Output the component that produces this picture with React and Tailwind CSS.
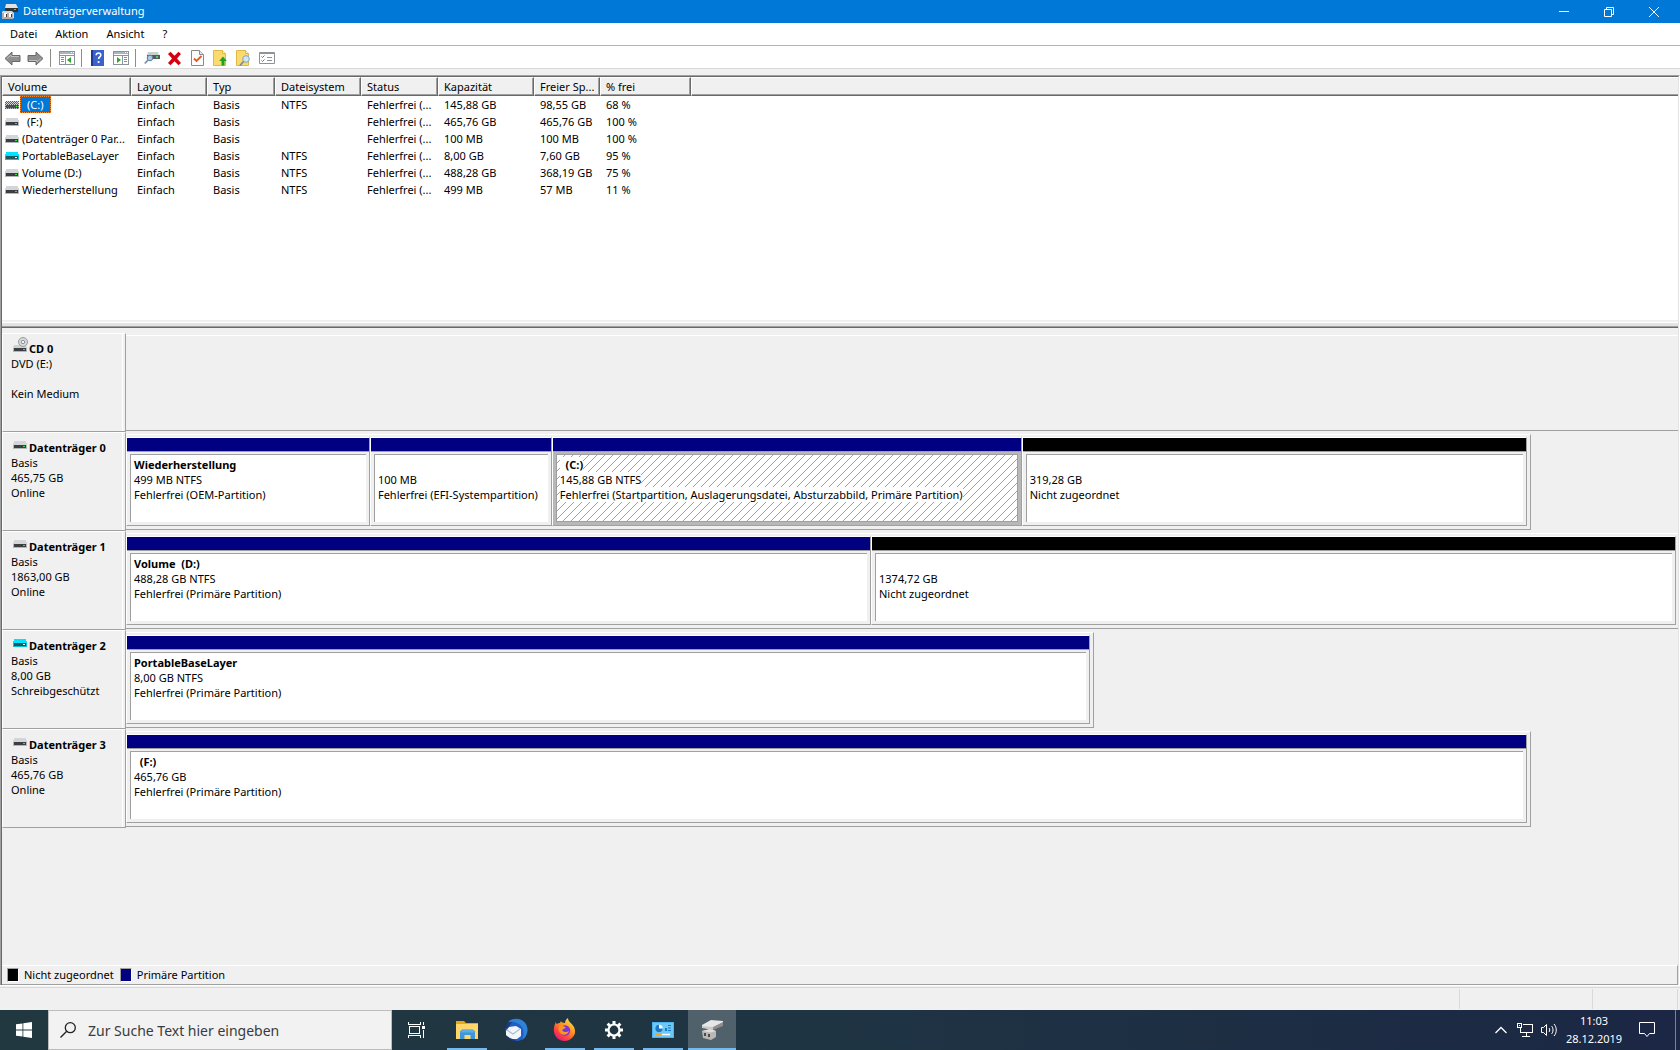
import clsx from 'clsx';

const MENU = ['Datei', 'Aktion', 'Ansicht', '?'];

const COLUMNS = ['Volume', 'Layout', 'Typ', 'Dateisystem', 'Status', 'Kapazität', 'Freier Sp...', '% frei'];

const VOLUMES = [
  { name: '(C:)', letterOnly: true, selected: true, fs: 'NTFS', size: '145,88 GB', free: '98,55 GB', pct: '68 %' },
  { name: '(F:)', letterOnly: true, fs: '', size: '465,76 GB', free: '465,76 GB', pct: '100 %' },
  { name: '(Datenträger 0 Par...', fs: '', size: '100 MB', free: '100 MB', pct: '100 %' },
  { name: 'PortableBaseLayer', virtual: true, fs: 'NTFS', size: '8,00 GB', free: '7,60 GB', pct: '95 %' },
  { name: 'Volume (D:)', fs: 'NTFS', size: '488,28 GB', free: '368,19 GB', pct: '75 %' },
  { name: 'Wiederherstellung', fs: 'NTFS', size: '499 MB', free: '57 MB', pct: '11 %' },
];

// width = share of the pane, grow = share of the disk
const DISKS = [
  { title: 'CD 0', kind: 'cd', lines: ['DVD (E:)', '', 'Kein Medium'], width: 100, parts: [] },
  {
    title: 'Datenträger 0', lines: ['Basis', '465,75 GB', 'Online'], width: 90.5,
    parts: [
      { grow: 242, name: 'Wiederherstellung', size: '499 MB NTFS', status: 'Fehlerfrei (OEM-Partition)' },
      { grow: 180, name: '', size: '100 MB', status: 'Fehlerfrei (EFI-Systempartition)' },
      { grow: 468, name: '  (C:)', size: '145,88 GB NTFS', status: 'Fehlerfrei (Startpartition, Auslagerungsdatei, Absturzabbild, Primäre Partition)', selected: true },
      { grow: 503, name: '', size: '319,28 GB', status: 'Nicht zugeordnet', free: true },
    ],
  },
  {
    title: 'Datenträger 1', lines: ['Basis', '1863,00 GB', 'Online'], width: 100,
    parts: [
      { grow: 743, name: 'Volume  (D:)', size: '488,28 GB NTFS', status: 'Fehlerfrei (Primäre Partition)' },
      { grow: 803, name: '', size: '1374,72 GB', status: 'Nicht zugeordnet', free: true },
    ],
  },
  {
    title: 'Datenträger 2', kind: 'virtual', lines: ['Basis', '8,00 GB', 'Schreibgeschützt'], width: 62.4,
    parts: [{ grow: 1, name: 'PortableBaseLayer', size: '8,00 GB NTFS', status: 'Fehlerfrei (Primäre Partition)' }],
  },
  {
    title: 'Datenträger 3', lines: ['Basis', '465,76 GB', 'Online'], width: 90.5,
    parts: [{ grow: 1, name: '  (F:)', size: '465,76 GB', status: 'Fehlerfrei (Primäre Partition)' }],
  },
];

function DiskIcon({ virtual, selected }) {
  return (
    <svg width="14" height="8" viewBox="0 0 14 8" className="shrink-0" shapeRendering="crispEdges">
      <path d="M1 0h12l1 4H0z" fill={virtual ? '#00e5ff' : '#d3d5d8'} />
      <path d="M0 4h14v4H0z" fill={virtual ? '#00c4d0' : '#b4b7ba'} />
      <path d="M1 4h12v3H1z" fill={virtual ? '#20565c' : '#3c3f41'} />
      <path d="M10 5h2v1h-2z" fill={virtual ? '#ffffff' : '#2bea3c'} />
      {selected && (
        <>
          <path d="M0 1.500h14M0 3.500h14M0 5.500h14M0 7.500h14" stroke="#0078d7" strokeDasharray="1 1" />
          <path d="M0 .5h14M0 2.500h14M0 4.500h14M0 6.500h14" stroke="#0078d7" strokeDasharray="1 1" strokeDashoffset="1" />
        </>
      )}
    </svg>
  );
}

function CdIcon() {
  return (
    <svg width="15" height="15" viewBox="0 0 15 15" className="shrink-0">
      <path d="M1 8h12l1 3H0z" fill="#cfd1d3" />
      <path d="M0 11h14v4H0z" fill="#b4b7ba" />
      <path d="M1 11h12v3H1z" fill="#3c3f41" />
      <path d="M10 12h2v1h-2z" fill="#2bea3c" />
      <circle cx="10" cy="5" r="4.500" fill="#d6d8da" stroke="#9a9c9e" />
      <circle cx="10" cy="5" r="1.700" fill="#f4f4f4" stroke="#8f9193" />
    </svg>
  );
}

function AppIcon() {
  return (
    <svg width="16" height="16" viewBox="0 0 16 16">
      <path d="M4 0h10l2 4H3z" fill="#e2e2e2" />
      <path d="M3 4h13v4H3z" fill="#2f3334" />
      <path d="M12 5h2v1h-2z" fill="#2bea3c" />
      <path d="M1 7h9l2 2v5l-2 1H0V8z" fill="#d6d6d6" />
      <path d="M0 9h11v6H0z" fill="#b3aeac" />
      <path d="M2 9h3v4H2zM7 9h3v4H7z" fill="#fff" />
      <path d="M4 10h1v3H4zM9 10h1v3H9z" fill="#3a3a3a" />
    </svg>
  );
}

function Arrow({ flip }) {
  return (
    <svg width="17" height="15" viewBox="0 0 17 15" className={flip ? 'rotate-180' : ''}>
      <path d="M1 7.500 8 1v3.500h8v6H8V14z" fill="#8f8f8f" stroke="#6a6a6a" strokeLinejoin="round" />
      <path d="M3 7.500 7 4v1.500h8" fill="none" stroke="#bdbdbd" />
    </svg>
  );
}

function PaneIcon({ right }) {
  return (
    <svg width="16" height="14" viewBox="0 0 16 14" shapeRendering="crispEdges">
      <path d="M.5.5h15v13H.5z" fill="#fff" stroke="#8a94a0" />
      <path d="M1 1h14v2H1z" fill="#a9b4c0" />
      <path d="M12 1h1v1h-1zM14 1h1v1h-1z" fill="#fff" />
      <path d="M1 4.500h14" stroke="#8a94a0" />
      {right ? (
        <>
          <path d="M9.500 5v8" stroke="#8a94a0" />
          <path d="M11 6.500h3M11 8.500h3M11 10.500h3" stroke="#7d8ea3" />
          <path d="M4 6l4 3-4 3z" fill="#2fa52a" shapeRendering="auto" />
        </>
      ) : (
        <>
          <path d="M6.500 5v8" stroke="#8a94a0" />
          <path d="M2 6.500h3M2 8.500h3M2 10.500h3" stroke="#7d8ea3" />
          <path d="M12 6l-4 3 4 3z" fill="#2fa52a" shapeRendering="auto" />
        </>
      )}
    </svg>
  );
}

function HelpIcon() {
  return (
    <svg width="13" height="16" viewBox="0 0 13 16">
      <path d="M0 0h13v16H0z" fill="#3a62cc" />
      <path d="M0 0h2v16H0z" fill="#1c3a8f" />
      <path d="M5.200 5.200c0-1.500 1-2.200 2.300-2.200s2.300.8 2.300 2c0 1.900-2.200 2-2.200 4" fill="none" stroke="#fff" strokeWidth="1.600" />
      <circle cx="7.600" cy="12" r="1.100" fill="#fff" />
    </svg>
  );
}

function ConnectIcon() {
  return (
    <svg width="16" height="14" viewBox="0 0 16 14">
      <path d="M4 1h10l1 3H3z" fill="#cdd0d3" />
      <path d="M3 4h13v4H3z" fill="#565a5d" />
      <path d="M12 5h2v2h-2z" fill="#2bea3c" />
      <circle cx="6" cy="7" r="2.800" fill="#a9cbe6" stroke="#5d7f9c" />
      <path d="M4 9 .8 12.500" stroke="#7692ab" strokeWidth="1.800" />
    </svg>
  );
}

function DeleteIcon() {
  return (
    <svg width="15" height="15" viewBox="0 0 15 15">
      <path d="M1 3 3.500.8 7.500 4.800 11.500.8 14 3 10 7.500l4 4.500-2.500 2.200-4-4-4 4L1 12l4-4.500z" fill="#d3000f" />
    </svg>
  );
}

function CheckPageIcon() {
  return (
    <svg width="13" height="16" viewBox="0 0 13 16">
      <path d="M.5.5h8l4 4v11H.5z" fill="#fdfdfd" stroke="#8a8a8a" />
      <path d="M8.500.5v4h4" fill="#e6e6e6" stroke="#8a8a8a" />
      <path d="m3 8.500 2.500 2.500 5-5" fill="none" stroke="#e2572b" strokeWidth="1.800" />
    </svg>
  );
}

function FolderPageIcon({ find }) {
  return (
    <svg width="15" height="16" viewBox="0 0 15 16">
      <path d="M.5.5h9l3 3v12H.5z" fill="#fbdb6d" stroke="#e0b84a" />
      <path d="M9.500.5v3h3" fill="#fff3c4" stroke="#e0b84a" />
      {find ? (
        <>
          <circle cx="10" cy="9" r="3.300" fill="#cfe6f7" stroke="#7fa6c4" />
          <path d="m7.500 11.500-3.500 4" stroke="#7b8a97" strokeWidth="1.800" />
        </>
      ) : (
        <path d="M10 6.500 13.800 11h-2.300v4.500h-3V11H6.200z" fill="#1ea321" />
      )}
    </svg>
  );
}

function ListIcon() {
  return (
    <svg width="16" height="12" viewBox="0 0 16 12">
      <path d="M.5.5h15v11H.5z" fill="#fff" stroke="#8b939b" />
      <path d="M1 1h14v1H1z" fill="#8b939b" />
      <path d="m2.500 4.500 1 1 2-2M2.500 8.500l1 1 2-2" fill="none" stroke="#2d7fd3" />
      <path d="M8 5.500h5M8 8.500h5" stroke="#8b939b" />
    </svg>
  );
}

const TOOLS = [
  [{ label: 'Zurück', icon: <Arrow /> }, { label: 'Vorwärts', icon: <Arrow flip /> }],
  [{ label: 'Konsolenstruktur', icon: <PaneIcon /> }],
  [{ label: 'Hilfe', icon: <HelpIcon /> }, { label: 'Aktionsbereich', icon: <PaneIcon right /> }],
  [
    { label: 'Verbinden', icon: <ConnectIcon /> },
    { label: 'Löschen', icon: <DeleteIcon /> },
    { label: 'Eigenschaften', icon: <CheckPageIcon /> },
    { label: 'Nach oben', icon: <FolderPageIcon /> },
    { label: 'Suchen', icon: <FolderPageIcon find /> },
    { label: 'Optionen', icon: <ListIcon /> },
  ],
];

function TitleBar() {
  return (
    <header className="flex h-[23px] items-center bg-[#0078d7] pl-0.5 pr-1 text-white">
      <AppIcon />
      <h1 className="ml-[5px] flex-1">Datenträgerverwaltung</h1>
      <button aria-label="Minimieren" className="flex h-full w-[45px] items-center justify-center">
        <svg width="10" height="10" stroke="#fff"><path d="M0 4.500h10" /></svg>
      </button>
      <button aria-label="Verkleinern" className="flex h-full w-[45px] items-center justify-center">
        <svg width="10" height="10" fill="none" stroke="#fff"><path d="M.5 2.500h7v7h-7zM2.500 2V.5h7v7H8" /></svg>
      </button>
      <button aria-label="Schließen" className="flex h-full w-[45px] items-center justify-center">
        <svg width="10" height="10" stroke="#fff"><path d="m0 0 10 10M10 0 0 10" /></svg>
      </button>
    </header>
  );
}

function VolumeTable() {
  return (
    <div className="min-h-[243px] bg-white">
      <table className="w-full table-fixed border-separate border-spacing-0 text-left">
        <colgroup>
          <col className="w-[129px]" />
          <col className="w-[76px]" />
          <col className="w-[68px]" />
          <col className="w-[86px]" />
          <col className="w-[77px]" />
          <col className="w-[96px]" />
          <col className="w-[66px]" />
          <col className="w-[91px]" />
          <col />
        </colgroup>
        <thead>
          <tr className="h-[19px] bg-[#f0f0f0]">
            {COLUMNS.map((c) => (
              <th key={c} className="whitespace-nowrap border-b border-l border-r border-t border-b-[#696969] border-l-white border-r-[#696969] border-t-white p-0 pl-[5px] font-normal leading-4 shadow-[inset_-1px_-1px_0_#a0a0a0]">
                {c}
              </th>
            ))}
            <th aria-hidden="true" className="border-b border-l border-t border-b-[#696969] border-l-white border-t-white p-0 shadow-[inset_0_-1px_0_#a0a0a0]" />
          </tr>
        </thead>
        <tbody>
          {VOLUMES.map((v) => (
            <tr key={v.name} className="h-[17px] whitespace-nowrap leading-[17px]">
              <td className="p-0 pl-[3px]">
                <div className="flex items-center gap-px">
                  <DiskIcon virtual={v.virtual} selected={v.selected} />
                  <span className={clsx(
                    'h-[17px] border border-dotted leading-[15px]',
                    v.letterOnly ? 'px-1.5' : 'px-px',
                    v.selected ? 'border-[#ff8728] bg-[#0078d7] text-white' : 'border-transparent',
                  )}>
                    {v.name}
                  </span>
                </div>
              </td>
              <td className="p-0 pl-1.5">Einfach</td>
              <td className="p-0 pl-1.5">Basis</td>
              <td className="p-0 pl-1.5">{v.fs}</td>
              <td className="p-0 pl-1.5">Fehlerfrei (...</td>
              <td className="p-0 pl-1.5">{v.size}</td>
              <td className="p-0 pl-1.5">{v.free}</td>
              <td className="p-0 pl-1.5">{v.pct}</td>
              <td className="p-0" />
            </tr>
          ))}
        </tbody>
      </table>
    </div>
  );
}

function Partition({ part }) {
  const textBg = part.selected ? 'bg-white' : '';
  return (
    <div className="flex min-w-0 basis-0 flex-col border border-b-[#a0a0a0] border-l-white border-r-[#a0a0a0] border-t-white" style={{ flexGrow: part.grow }}>
      <div className={clsx('h-3.5 border-b border-b-[#a0a0a0]', part.free ? 'bg-black' : 'bg-[#000080]')} />
      <div className={clsx('flex flex-1 p-[3px] pt-0.5', part.selected ? 'bg-[#b8b8b8]' : 'bg-[#f0f0f0]')}>
        <div className={clsx(
          'min-w-0 flex-1 whitespace-pre border-l border-t border-[#a0a0a0] bg-white pl-[3px] pt-0.5 leading-[15px]',
          part.selected && 'border-b border-r bg-[linear-gradient(135deg,transparent_45%,#a0a0a0_45%,#a0a0a0_55%,transparent_55%)] bg-[size:8px_8px]',
        )}>
          <div className="h-[15px] font-bold"><span className={textBg}>{part.name}</span></div>
          <div><span className={textBg}>{part.size}</span></div>
          <div><span className={textBg}>{part.status}</span></div>
        </div>
      </div>
    </div>
  );
}

function DiskRow({ disk }) {
  const isCd = disk.kind === 'cd';
  return (
    <section className="flex h-[99px]">
      <div className="w-[124px] shrink-0 border border-b-[#a0a0a0] border-l-white border-r-[#a0a0a0] border-t-white pr-0.5">
        <div className="h-full border-r border-white pl-2 pt-[7px] leading-[15px]">
          <h2 className={clsx('flex h-[15px] pl-0.5 font-bold', isCd ? 'gap-px' : 'gap-0.5')}>
            <span className={isCd ? '-mt-1' : 'mt-px'}>
              {isCd ? <CdIcon /> : <DiskIcon virtual={disk.kind === 'virtual'} />}
            </span>
            {disk.title}
          </h2>
          {disk.lines.map((l, i) => <div key={i} className="h-[15px]">{l}</div>)}
        </div>
      </div>
      <div className="flex-1 pb-px pt-0.5">
        <div
          className={clsx(
            'flex h-full border-b border-t border-b-[#a0a0a0] border-t-white pb-[3px] pt-0.5',
            disk.width < 100 ? 'border-r border-r-[#a0a0a0] pr-[3px]' : 'pr-0.5',
          )}
          style={{ width: `${disk.width}%` }}
        >
          {disk.parts.map((p, i) => <Partition key={i} part={p} />)}
        </div>
      </div>
    </section>
  );
}

function Swatch({ free, children }) {
  return (
    <div className="flex items-center gap-[5px]">
      <span className={clsx('h-3.5 w-3 border border-b-white border-l-[#a0a0a0] border-r-white border-t-[#a0a0a0]', free ? 'bg-black' : 'bg-[#000080]')} />
      {children}
    </div>
  );
}

function ExplorerIcon() {
  return (
    <svg width="22" height="20" viewBox="0 0 22 20">
      <path d="M0 1h8l2 2h12v16H0z" fill="#e8a713" />
      <path d="M0 4h22v15H0z" fill="#fed66b" />
      <path d="M4 19v-7.500L6 9.500h11l2 2V19h-4.500v-4h-6v4z" fill="#3f97d8" />
      <path d="M4 12.500 6 10h11l2 2.500z" fill="#57aee8" />
    </svg>
  );
}

function ThunderbirdIcon() {
  return (
    <svg width="24" height="24" viewBox="0 0 24 24">
      <circle cx="12.500" cy="12" r="11" fill="#1f5fc4" />
      <path d="M4 4c5-5 14-4 18 2 3 6 1 13-4 16 3-6 2-13-3-16S7 3 4 4z" fill="#2f82d8" />
      <path d="M2 13 5 9l7-1 5 3 0 7-4 3-7 0-4-4z" fill="#f2f5f9" />
      <path d="m3 12 6 4 7-5" fill="none" stroke="#a9bfd6" strokeWidth="1.200" />
      <path d="M1 11c0-4 3-7 7-7L4 10zM3 18c1 4 6 6 10 5-3-1-4-2-7-3z" fill="#22357f" />
    </svg>
  );
}

function FirefoxIcon() {
  return (
    <svg width="24" height="24" viewBox="0 0 24 24">
      <defs>
        <linearGradient id="fx" x1="0.900" y1="0" x2="0.200" y2="1">
          <stop offset="0" stopColor="#fff04a" />
          <stop offset="0.400" stopColor="#ff9a1f" />
          <stop offset="0.700" stopColor="#ff4a3c" />
          <stop offset="1" stopColor="#e1127f" />
        </linearGradient>
      </defs>
      <path d="M3 4c0 1 .5 2 1 2 1-1 2-1 3-1l1-2c0 1 2 2 4 2 0-2 1-4 3-5 0 4 4 5 6 9 2 5 1 8-2 11-4 4-11 4-15 0C0 16 0 9 3 4z" fill="url(#fx)" />
      <circle cx="12" cy="12.500" r="5.200" fill="#7a35d8" />
      <path d="M6 8c3-1 5 0 7 2-2 0-2 1-4 2 1 2 4 3 7 1-1 4-6 5-9 2C5.500 13 5 10 6 8z" fill="#ff9422" />
    </svg>
  );
}

function GearIcon() {
  return (
    <svg width="18" height="18" viewBox="0 0 18 18" fill="none" stroke="#fff">
      <circle cx="9" cy="9" r="5.500" strokeWidth="2.200" />
      <g strokeWidth="3">
        <path d="M9 0v3M9 15v3M0 9h3M15 9h3M2.600 2.600l2.200 2.200M13.200 13.200l2.200 2.200M15.400 2.600l-2.200 2.200M4.800 13.200l-2.200 2.200" />
      </g>
    </svg>
  );
}

function ControlPanelIcon() {
  return (
    <svg width="22" height="16" viewBox="0 0 22 16">
      <path d="M0 0h22v16H0z" fill="#4bb4ec" />
      <path d="M1 1h20v14H1z" fill="#6cc8f8" />
      <circle cx="7" cy="6.500" r="3.800" fill="#fff" />
      <path d="M7 6.500V2.700a3.800 3.800 0 1 0 3.800 3.800z" fill="#1979c4" />
      <path d="M13 6h2v3h-2zM16 3h3v1h-3zM16 5.500h3v1h-3zM16 8h3v1h-3z" fill="#1979c4" />
      <path d="M3 12.500h6" stroke="#f5a623" strokeWidth="1.500" />
      <path d="M10 12.500h8" stroke="#fff" strokeWidth="1.500" />
    </svg>
  );
}

function DisksIcon() {
  return (
    <svg width="24" height="22" viewBox="0 0 24 22">
      <path d="m2 6 9-5 12 1v3l-9 4L2 8z" fill="#e6e6e6" />
      <path d="m13 8 10-5v4l-10 4z" fill="#8d8d8d" />
      <path d="M2 7l11 1v3L2 9z" fill="#c9c9c9" />
      <path d="M2 12l8-2 6 2v6l-5 3-8-2z" fill="#b9b6b3" />
      <path d="M2 12l8-2 6 2-5 1.500z" fill="#dedede" />
      <path d="M4 14h2v3H4zM8 15h2v3H8z" fill="#4b4b4b" />
    </svg>
  );
}

const TASKS = [
  { label: 'Explorer', icon: <ExplorerIcon />, open: true },
  { label: 'Thunderbird', icon: <ThunderbirdIcon /> },
  { label: 'Firefox', icon: <FirefoxIcon />, open: true },
  { label: 'Einstellungen', icon: <GearIcon />, open: true },
  { label: 'Systemsteuerung', icon: <ControlPanelIcon />, open: true },
  { label: 'Datenträgerverwaltung', icon: <DisksIcon />, open: true, active: true },
];

function Taskbar() {
  return (
    <footer className="flex h-10 items-stretch bg-linear-to-r from-[#213840] via-[#1f3443] to-[#1b2744] text-white">
      <button aria-label="Start" className="flex w-12 items-center justify-center">
        <svg width="16" height="16" viewBox="0 0 16 16" fill="#fff">
          <path d="M0 2.300 6.500 1.400v6.200H0zM7.300 1.300 16 0v7.600H7.300zM0 8.400h6.500v6.200L0 13.700zM7.300 8.400H16V16l-8.700-1.300z" />
        </svg>
      </button>
      <label className="flex w-[344px] items-center gap-3 border border-[#bcbcbc] bg-[#f2f2f2] pl-[11px]">
        <svg width="16" height="16" viewBox="0 0 16 16" fill="none" stroke="#222" strokeWidth="1.300">
          <circle cx="10.300" cy="5.700" r="5" />
          <path d="M6.700 9.300.5 15.500" />
        </svg>
        <input
          type="text"
          aria-label="Suche"
          placeholder="Zur Suche Text hier eingeben"
          className="min-w-0 flex-1 bg-transparent text-[14px] text-[#333] outline-none placeholder:text-[#3b3b3b]"
        />
      </label>
      <button aria-label="Taskansicht" className="flex w-12 items-center justify-center">
        <svg width="17" height="16" viewBox="0 0 17 16" fill="none" stroke="#fff" shapeRendering="crispEdges">
          <path d="M1.500 4.500h10v7h-10zM.5 0v2.500h12V0M.5 16v-2.500h12V16M15.500 0v3M15.500 8v8" />
          <path d="M14 4h3v3h-3z" fill="#fff" stroke="none" />
        </svg>
      </button>
      <nav className="ml-[3px] flex gap-px">
        {TASKS.map((t) => (
          <button key={t.label} aria-label={t.label} className={clsx('flex w-12 flex-col items-center', t.active && 'bg-[#50616b]')}>
            <span className="flex flex-1 items-center pt-0.5">{t.icon}</span>
            <span className={clsx('h-0.5', t.active ? 'w-12' : 'w-10', t.open && 'bg-[#76b9ed]')} />
          </button>
        ))}
      </nav>
      <div className="ml-auto flex items-center">
        <button aria-label="Ausgeblendete Symbole" className="flex w-6 justify-center">
          <svg width="12" height="8" fill="none" stroke="#fff" strokeWidth="1.300"><path d="m.5 7 5.500-5.500L11.500 7" /></svg>
        </button>
        <button aria-label="Netzwerk" className="flex w-6 justify-center">
          <svg width="16" height="14" viewBox="0 0 16 14" fill="none" stroke="#fff" shapeRendering="crispEdges">
            <path d="M6 1.500h9.500v8H3.500V5M9.500 10v3M5 13.500h8M.5.500h4v4h-4zM2 2.500h1" />
          </svg>
        </button>
        <button aria-label="Lautstärke" className="flex w-6 justify-center">
          <svg width="17" height="14" viewBox="0 0 17 14" fill="none" stroke="#fff">
            <path d="M.5 4.500h2l3-3v11l-3-3h-2zM8 5c1 1 1 3 0 4M10.500 3c2 2 2 6 0 8M13 1c3 3 3 9 0 12" />
          </svg>
        </button>
        <time className="w-[66px] text-center leading-[18px]">
          11:03<br />28.12.2019
        </time>
        <button aria-label="Info-Center" className="flex w-10 justify-center">
          <svg width="16" height="16" viewBox="0 0 16 16" fill="none" stroke="#fff"><path d="M.5.5h15v11h-5L8 14.500 5.500 11.500h-5z" /></svg>
        </button>
        <button aria-label="Desktop anzeigen" className="ml-2 h-10 w-[5px] border-l border-[#7c8494]" />
      </div>
    </footer>
  );
}

export default function App() {
  return (
    <div className="flex min-h-screen flex-col bg-[#f0f0f0] font-['Noto_Sans','Open_Sans',sans-serif] text-[11px] text-black">
      <TitleBar />
      <nav className="flex h-[23px] items-center border-b border-[#b4b4b8] bg-white pl-px">
        {MENU.map((m) => <button key={m} className="px-[9px]">{m}</button>)}
      </nav>
      <div className="flex h-[23px] items-center border-b border-[#d9d9d9] bg-white pl-px pt-0.5" role="toolbar">
        {TOOLS.map((group, i) => (
          <div key={i} className="flex items-center">
            {i > 0 && <span className="ml-[3px] mr-1 h-[18px] w-px bg-[#8d8d8d]" />}
            {group.map((t) => (
              <button key={t.label} aria-label={t.label} className="flex w-[23px] items-center justify-center">{t.icon}</button>
            ))}
          </div>
        ))}
      </div>

      <main className="mt-1.5 flex flex-1 flex-col border-l border-r border-t border-l-[#a0a0a0] border-r-white border-t-[#a0a0a0]">
        <div className="flex flex-1 flex-col border-l border-r border-t border-l-[#696969] border-r-[#e3e3e3] border-t-[#696969]">
          <VolumeTable />
          <div className="h-2 border-b border-[#696969] pt-0.5">
            <div className="h-[5px] border-b border-t border-b-[#a0a0a0] border-t-white bg-[#e3e3e3]" />
          </div>
          <div className="flex-1 pt-[5px]">
            {DISKS.map((d) => <DiskRow key={d.title} disk={d} />)}
          </div>
          <div className="flex h-5 items-center gap-1.5 border-b border-r border-t border-b-[#a0a0a0] border-r-[#a0a0a0] border-t-white pl-[5px]">
            <Swatch free>Nicht zugeordnet</Swatch>
            <Swatch>Primäre Partition</Swatch>
          </div>
        </div>
      </main>

      <div className="flex h-[25px] justify-end border-t border-white pt-px">
        <div className="flex flex-1 justify-end border-t border-[#d9d9d9] py-px pr-0.5">
          <span className="w-[133px] border-l border-[#d9d9d9]" />
          <span className="w-[86px] border-l border-r border-[#d9d9d9]" />
        </div>
      </div>
      <Taskbar />
    </div>
  );
}
